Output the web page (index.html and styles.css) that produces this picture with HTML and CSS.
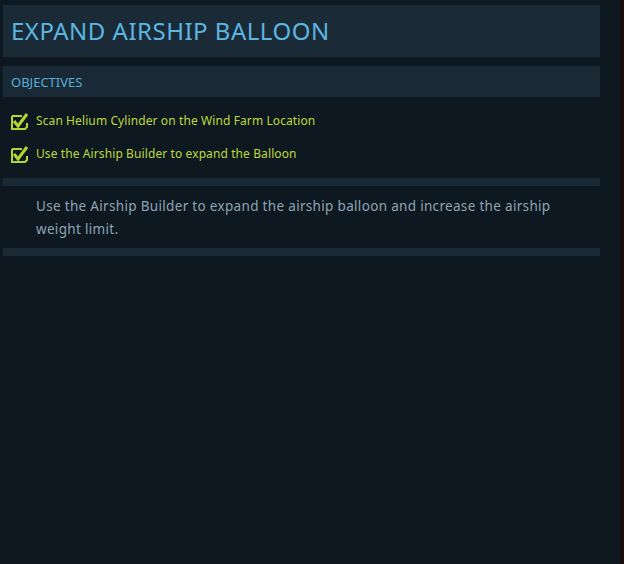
FILE: index.html
```html
<!DOCTYPE html>
<html lang="en">
<head>
    <meta charset="UTF-8">
    <title>Expand Airship Balloon</title>
    <link rel="stylesheet" href="styles.css">
</head>
<body>
    <div class="quest-panel">
        <div class="quest-title">
            <h1>EXPAND AIRSHIP BALLOON</h1>
        </div>
        <div class="section-header">OBJECTIVES</div>
        <ul class="objectives">
            <li>
                <svg class="check" width="20" height="20" viewBox="0 0 20 20">
                    <path d="M2 5 H12 M2 5 V18 H15 L17 16 V12" fill="none" stroke="#b5d631" stroke-width="2"/>
                    <path d="M4 10 L8 15 L17 3" fill="none" stroke="#b5d631" stroke-width="3"/>
                </svg>
                <span>Scan Helium Cylinder on the Wind Farm Location</span>
            </li>
            <li>
                <svg class="check" width="20" height="20" viewBox="0 0 20 20">
                    <path d="M2 5 H12 M2 5 V18 H15 L17 16 V12" fill="none" stroke="#b5d631" stroke-width="2"/>
                    <path d="M4 10 L8 15 L17 3" fill="none" stroke="#b5d631" stroke-width="3"/>
                </svg>
                <span>Use the Airship Builder to expand the Balloon</span>
            </li>
        </ul>
        <div class="divider"></div>
        <p class="description">Use the Airship Builder to expand the airship balloon and increase the airship weight limit.</p>
        <div class="divider"></div>
    </div>
</body>
</html>
```
FILE: styles.css
```css
body {
    margin: 0;
    width: 624px;
    height: 564px;
    overflow: hidden;
    font-family: 'Noto Sans', sans-serif;
    background: #0e1820;
    box-shadow: inset -4px 0 0 #1a0e0c;
}
.quest-panel {
    width: 597px;
    padding: 5px 0 0 3px;
}
.quest-title {
    background: #1a2a36;
    height: 52px;
    display: flex;
    align-items: center;
    padding-left: 8px;
}
h1 {
    margin: 0 0 2px;
    font-family: 'Noto Sans', sans-serif;
    font-weight: 400;
    font-size: 24px;
    letter-spacing: 0.5px;
    color: #5cb6e0;
}
.section-header {
    margin-top: 9px;
    background: #192a36;
    height: 31px;
    display: flex;
    align-items: center;
    padding-left: 8px;
    font-size: 13px;
    color: #58aed8;
}
.objectives {
    list-style: none;
    margin: 0;
    padding: 7px 0 8px 7px;
}
.objectives li {
    display: flex;
    align-items: center;
    gap: 6px;
    height: 33px;
    font-size: 12px;
    letter-spacing: 0.1px;
    color: #bdd83e;
}
.divider {
    height: 8px;
    background: #192a36;
}
.description {
    margin: 0;
    padding: 9px 40px 7px 33px;
    font-size: 13.5px;
    letter-spacing: 0.32px;
    line-height: 23px;
    color: #8ea4b4;
}
```
